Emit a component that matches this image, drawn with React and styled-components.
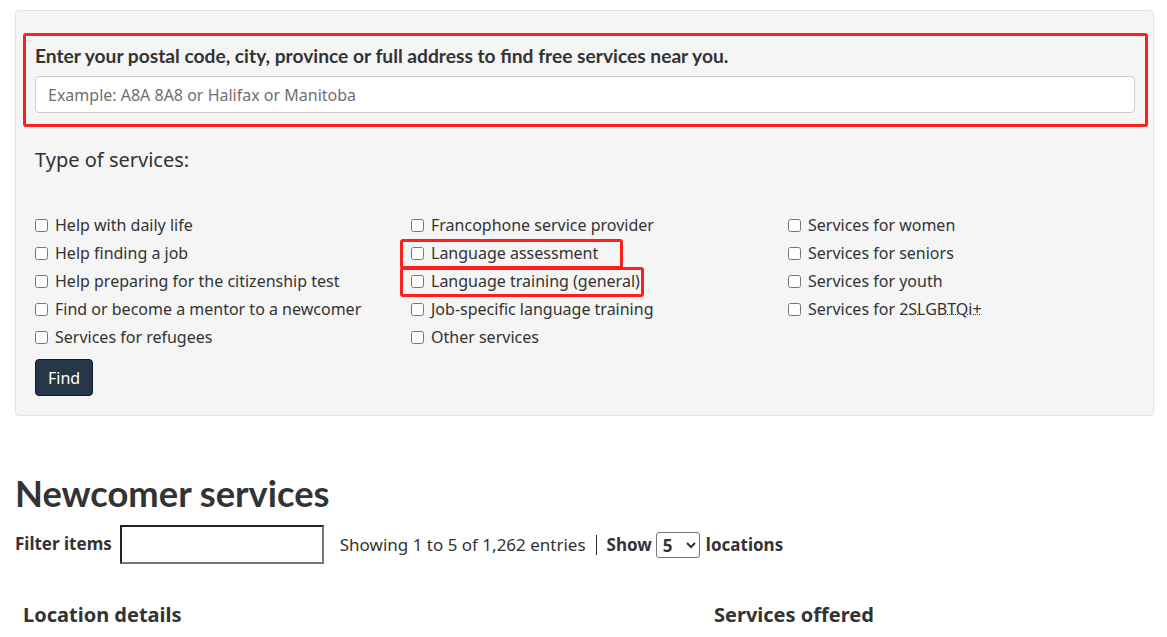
import styled, { createGlobalStyle } from "styled-components";

const GlobalStyle = createGlobalStyle`
  html, body {
    margin: 0;
    padding: 0;
    background: #fff;
  }
  body {
    font-family: "Noto Sans", sans-serif;
    color: #333;
    font-size: 16px;
  }
`;

const Page = styled.main`
  padding: 10px 13px 0 15px;
`;

const SearchPanel = styled.form`
  background: #f5f5f5;
  border: 1px solid #e3e3e3;
  border-radius: 4px;
  padding: 22px 5px 19px 7px;
`;

const Highlight = styled.div`
  border: 3px solid #ff1f1f;
  border-radius: 3px;
  padding: 8px 10px 11px 9px;
`;

const QueryLabel = styled.label`
  display: block;
  font-family: Lato, "Noto Sans", sans-serif;
  font-weight: 700;
  font-size: 19.2px;
  line-height: 23px;
  color: #333;
  margin-bottom: 9px;
`;

const QueryInput = styled.input`
  display: block;
  box-sizing: border-box;
  width: 100%;
  height: 37px;
  padding: 6px 12px;
  border: 1px solid #ccc;
  border-radius: 4px;
  background: #fff;
  font-family: "Noto Sans", sans-serif;
  font-size: 16px;
  color: #333;
  &::placeholder {
    color: #6f6f6f;
  }
`;

const Inner = styled.div`
  padding: 0 0 0 12px;
`;

const Legend = styled.h2`
  font-family: "Noto Sans", sans-serif;
  font-weight: 400;
  font-size: 20px;
  line-height: 24px;
  color: #333;
  margin: 21px 0 39px;
`;

const Options = styled.div`
  display: grid;
  grid-template-columns: 376px 377px 1fr;
`;

const Column = styled.ul`
  list-style: none;
  margin: 0;
  padding: 0;
  display: flex;
  flex-direction: column;
`;

const Option = styled.li`
  height: 28px;
  display: flex;
  align-items: center;
`;

const CheckLabel = styled.label`
  position: relative;
  display: inline-flex;
  align-items: center;
  gap: 7px;
  font-size: 16px;
  line-height: 22px;
  color: #333;
  &::after {
    content: "";
    display: ${(p) => (p.$marked ? "block" : "none")};
    position: absolute;
    left: -11px;
    top: -3px;
    bottom: -5px;
    right: ${(p) => p.$markRight}px;
    border: 3px solid #ff1f1f;
    border-radius: 3px;
    pointer-events: none;
  }
`;

const Box = styled.input.attrs({ type: "checkbox" })`
  width: 13px;
  height: 13px;
  margin: 0;
  accent-color: #333;
`;

const Abbr = styled.abbr`
  text-decoration: underline dotted #333;
  text-underline-offset: -1px;
  text-decoration-thickness: 1px;
  cursor: help;
`;

const FindButton = styled.button`
  margin-top: 8px;
  height: 37px;
  padding: 0 12px;
  background: #26374a;
  color: #fff;
  border: 1px solid #091c2d;
  border-radius: 4px;
  font-family: "Noto Sans", sans-serif;
  font-size: 16px;
`;

const Title = styled.h1`
  font-family: Lato, "Noto Sans", sans-serif;
  font-weight: 700;
  font-size: 36.3px;
  line-height: 42px;
  color: #333;
  margin: 56px 0 11px;
`;

const FilterBar = styled.div`
  display: flex;
  align-items: center;
  font-size: 17px;
`;

const FilterLabel = styled.label`
  font-weight: 700;
  margin-right: 8px;
  margin-top: -3px;
`;

const FilterInput = styled.input`
  box-sizing: border-box;
  width: 204px;
  height: 39px;
  border-style: solid;
  border-width: 2px;
  border-color: #222 #777 #777 #222;
  background: #fff;
  margin-right: 16px;
`;

const Summary = styled.span`
  color: #333;
`;

const Divider = styled.span`
  display: inline-block;
  width: 1px;
  height: 20px;
  background: #333;
  margin: 0 10px 0 10px;
`;

const Strong = styled.span`
  font-weight: 700;
`;

const Select = styled.select`
  width: 44px;
  height: 26px;
  margin: 0 6px 0 4px;
  font-family: "Noto Sans", sans-serif;
  font-weight: 700;
  font-size: 17px;
  color: #333;
  border: 1px solid #767676;
  border-radius: 3px;
  background: #fff;
  padding: 0 2px;
`;

const TableHead = styled.div`
  display: grid;
  grid-template-columns: 691px 1fr;
  padding: 0 8px;
  margin-top: 38px;
`;

const HeadCell = styled.h3`
  margin: 0;
  font-family: "Noto Sans", sans-serif;
  font-weight: 700;
  font-size: 20px;
  line-height: 26px;
  color: #333;
`;

const columns = [
  [
    { text: "Help with daily life" },
    { text: "Help finding a job" },
    { text: "Help preparing for the citizenship test" },
    { text: "Find or become a mentor to a newcomer" },
    { text: "Services for refugees" },
  ],
  [
    { text: "Francophone service provider" },
    { text: "Language assessment", marked: true, right: -25 },
    { text: "Language training (general)", marked: true, right: -4 },
    { text: "Job-specific language training" },
    { text: "Other services" },
  ],
  [
    { text: "Services for women" },
    { text: "Services for seniors" },
    { text: "Services for youth" },
    { text: "Services for ", abbr: "2SLGBTQi+" },
  ],
];

export default function App() {
  return (
    <>
      <GlobalStyle />
      <Page>
        <SearchPanel onSubmit={(e) => e.preventDefault()}>
          <Highlight>
            <QueryLabel htmlFor="q">
              Enter your postal code, city, province or full address to find
              free services near you.
            </QueryLabel>
            <QueryInput
              id="q"
              placeholder="Example: A8A 8A8 or Halifax or Manitoba"
            />
          </Highlight>
          <Inner>
            <Legend>Type of services:</Legend>
            <Options>
              {columns.map((col, i) => (
                <Column key={i}>
                  {col.map((o) => (
                    <Option key={o.text + (o.abbr || "")}>
                      <CheckLabel $marked={o.marked} $markRight={o.right}>
                        <Box />
                        <span>
                          {o.text}
                          {o.abbr && (
                            <Abbr title="Two-Spirit, lesbian, gay, bisexual, transgender, queer, intersex">
                              {o.abbr}
                            </Abbr>
                          )}
                        </span>
                      </CheckLabel>
                    </Option>
                  ))}
                </Column>
              ))}
            </Options>
            <FindButton type="submit">Find</FindButton>
          </Inner>
        </SearchPanel>

        <Title>Newcomer services</Title>
        <FilterBar>
          <FilterLabel htmlFor="filter">Filter items</FilterLabel>
          <FilterInput id="filter" />
          <Summary>Showing 1 to 5 of 1,262 entries</Summary>
          <Divider />
          <Strong>Show</Strong>
          <Select defaultValue="5">
            <option>5</option>
            <option>10</option>
            <option>25</option>
          </Select>
          <Strong>locations</Strong>
        </FilterBar>
        <TableHead>
          <HeadCell>Location details</HeadCell>
          <HeadCell>Services offered</HeadCell>
        </TableHead>
      </Page>
    </>
  );
}
